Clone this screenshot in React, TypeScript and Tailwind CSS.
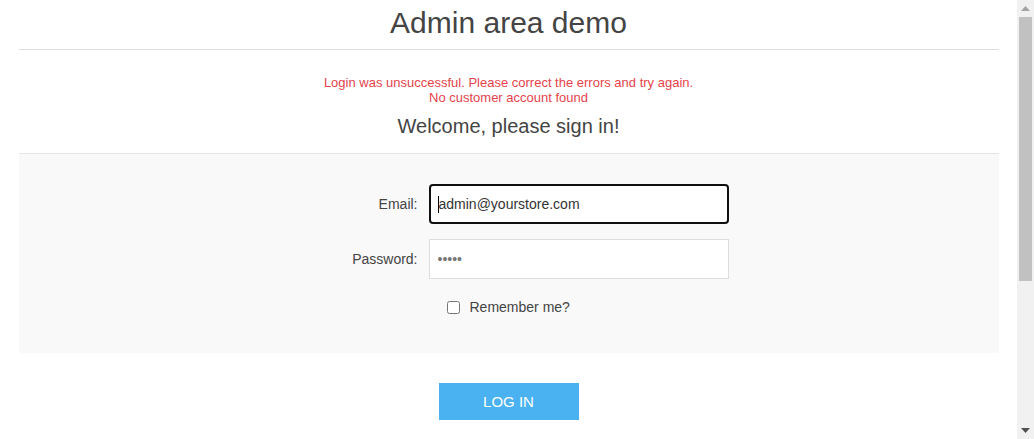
import { useState } from "react";

function Scrollbar() {
  return (
    <div className="flex h-screen w-[17px] shrink-0 flex-col bg-[#f1f1f1]">
      {/* up arrow */}
      <div className="flex h-[17px] items-center justify-center">
        <svg width="9" height="5" viewBox="0 0 9 5">
          <path d="M0 5 L4.5 0 L9 5 Z" fill="#a3a3a3" />
        </svg>
      </div>
      {/* thumb */}
      <div className="mx-[2px] h-[264px] bg-[#c1c1c1]" />
      <div className="flex-1" />
      {/* down arrow */}
      <div className="flex h-[17px] items-center justify-center">
        <svg width="9" height="5" viewBox="0 0 9 5">
          <path d="M0 0 L9 0 L4.5 5 Z" fill="#505050" />
        </svg>
      </div>
    </div>
  );
}

export default function App() {
  const [remember, setRemember] = useState(false);

  return (
    <div className="flex h-screen w-full overflow-hidden bg-white font-['Liberation_Sans',Arial,sans-serif] text-[#444]">
      <main className="flex-1 overflow-hidden">
        <div className="mx-auto w-[980px]">
          {/* PAGE TITLE */}
          <div className="border-b border-[#ddd] pt-[6px] pb-[9px]">
            <h1 className="text-center text-[30px] leading-[34px]">Admin area demo</h1>
          </div>

          {/* ERRORS + WELCOME */}
          <div className="border-b border-[#e4e4e4] pb-[15px]">
            <div className="mt-[25px] text-center text-[13px] leading-[15px] text-[#e4434b]">
              <p>Login was unsuccessful. Please correct the errors and try again.</p>
              <p>No customer account found</p>
            </div>
            <h2 className="mt-[9px] text-center text-[20px] leading-[24px]">Welcome, please sign in!</h2>
          </div>

          {/* FORM PANEL */}
          <div className="flex flex-col bg-[#f9f9f9] pt-[30px] pb-[36px]">
            <div className="flex h-[40px] items-center">
              <label className="w-[399px] text-right text-[14px]">Email:</label>
              <div className="ml-[11px] flex h-[40px] w-[300px] items-center rounded-[4px] border-2 border-[#101010] bg-white pl-[7px]">
                <span className="h-[17px] w-px bg-black" />
                <input
                  type="email"
                  defaultValue="admin@yourstore.com"
                  className="min-w-0 flex-1 bg-transparent text-[14px] text-[#333] outline-none"
                />
              </div>
            </div>

            <div className="mt-[15px] flex h-[40px] items-center">
              <label className="w-[399px] text-right text-[14px]">Password:</label>
              <input
                type="password"
                defaultValue="admin"
                className="ml-[11px] h-[40px] w-[300px] border border-[#ddd] bg-white pl-[8px] text-[14px] text-[#777] outline-none"
              />
            </div>

            <div className="mt-[18px] flex h-[20px] items-center pl-[428px]">
              <input
                type="checkbox"
                checked={remember}
                onChange={() => setRemember(!remember)}
                className="m-0 h-[13px] w-[13px]"
              />
              <span className="ml-[10px] text-[14px]">Remember me?</span>
            </div>
          </div>

          {/* SUBMIT */}
          <div className="mt-[30px] flex justify-center">
            <button className="h-[37px] w-[140px] bg-[#4ab2f1] pt-px text-[15px] uppercase text-white">
              Log in
            </button>
          </div>
        </div>
      </main>
      <Scrollbar />
    </div>
  );
}
